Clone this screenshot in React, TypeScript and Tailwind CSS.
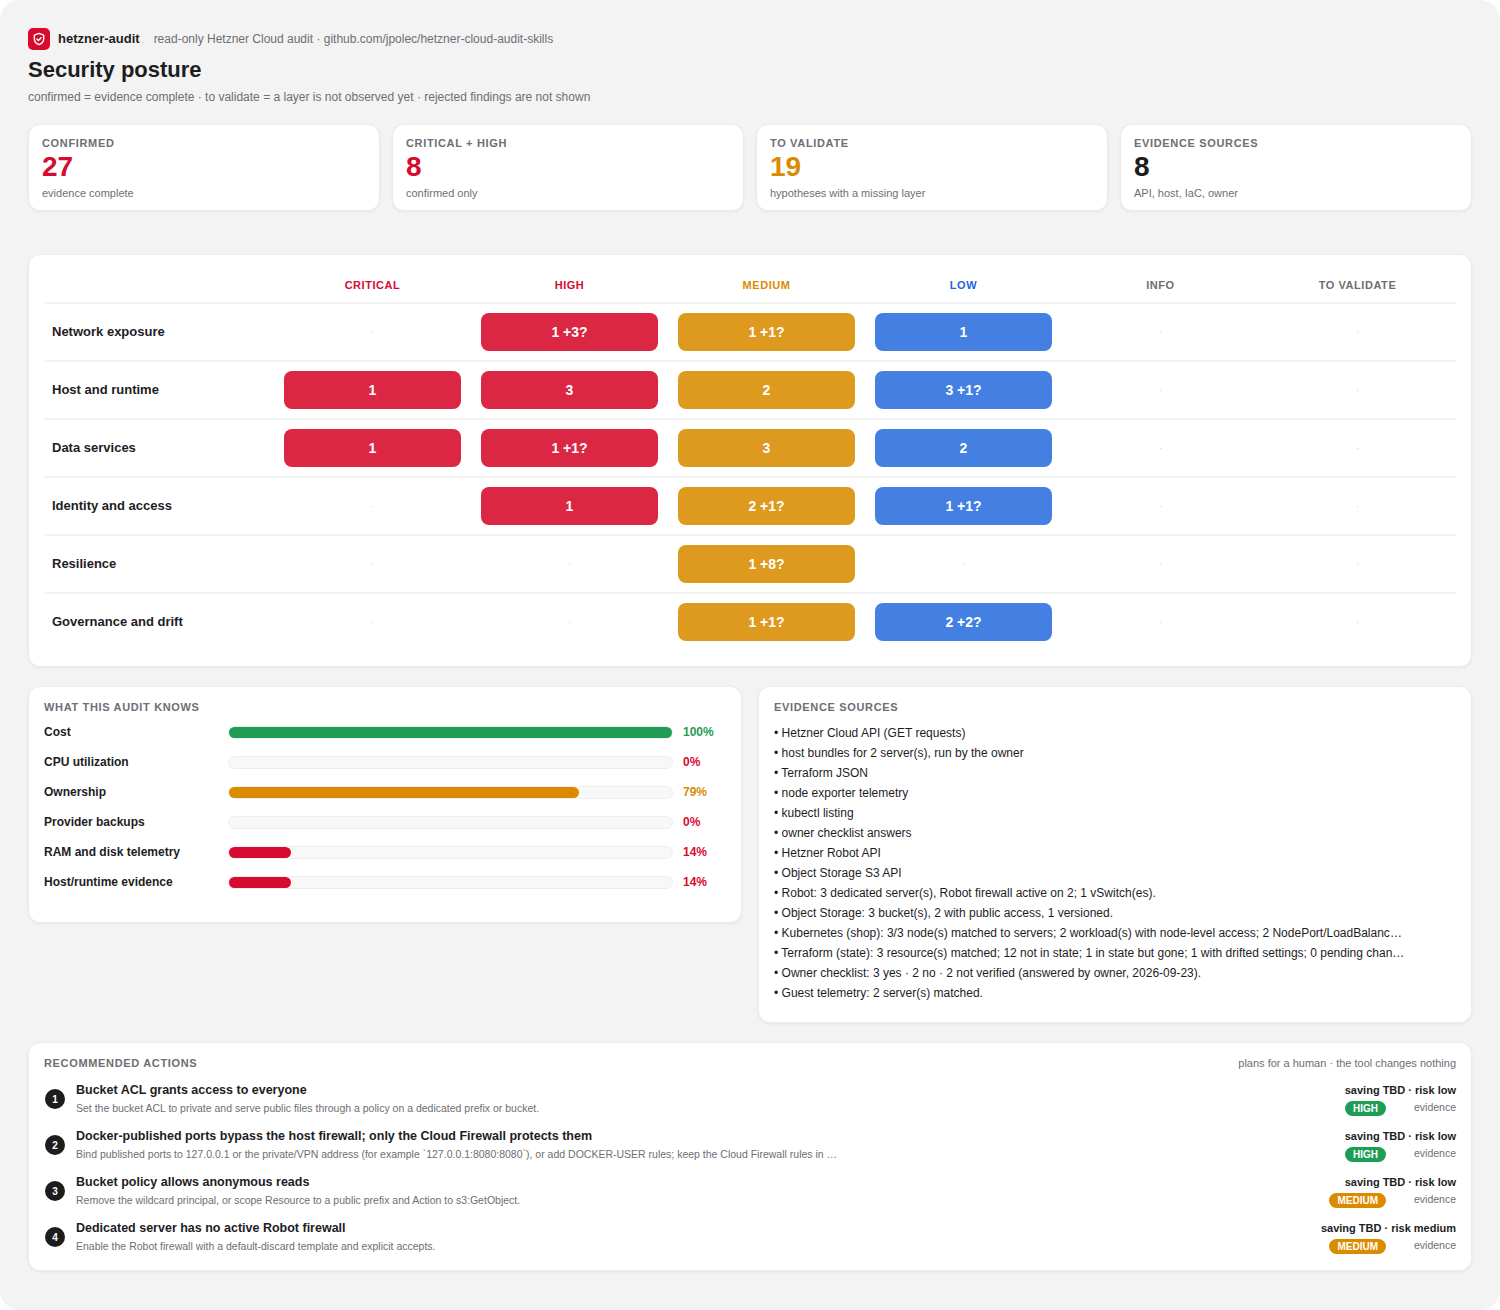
const stats = [
  { label: 'CONFIRMED', value: '27', note: 'evidence complete', color: 'text-[#d70a30]' },
  { label: 'CRITICAL + HIGH', value: '8', note: 'confirmed only', color: 'text-[#d70a30]' },
  { label: 'TO VALIDATE', value: '19', note: 'hypotheses with a missing layer', color: 'text-[#db8b00]' },
  { label: 'EVIDENCE SOURCES', value: '8', note: 'API, host, IaC, owner', color: 'text-[#1d1d1f]' },
];

const columns = [
  { label: 'CRITICAL', color: 'text-[#d70a30]', bg: 'bg-[#db2744]' },
  { label: 'HIGH', color: 'text-[#d70a30]', bg: 'bg-[#db2744]' },
  { label: 'MEDIUM', color: 'text-[#db8b00]', bg: 'bg-[#de991f]' },
  { label: 'LOW', color: 'text-[#1f66dc]', bg: 'bg-[#447fe2]' },
  { label: 'INFO', color: 'text-[#6e6e73]', bg: '' },
  { label: 'TO VALIDATE', color: 'text-[#6e6e73]', bg: '' },
];

const matrix = [
  { name: 'Network exposure', cells: ['', '1 +3?', '1 +1?', '1', '', ''] },
  { name: 'Host and runtime', cells: ['1', '3', '2', '3 +1?', '', ''] },
  { name: 'Data services', cells: ['1', '1 +1?', '3', '2', '', ''] },
  { name: 'Identity and access', cells: ['', '1', '2 +1?', '1 +1?', '', ''] },
  { name: 'Resilience', cells: ['', '', '1 +8?', '', '', ''] },
  { name: 'Governance and drift', cells: ['', '', '1 +1?', '2 +2?', '', ''] },
];

const coverage = [
  { name: 'Cost', pct: 100, text: 'text-[#1f9d55]', bar: 'bg-[#1f9d55]' },
  { name: 'CPU utilization', pct: 0, text: 'text-[#d70a30]', bar: 'bg-[#d70a30]' },
  { name: 'Ownership', pct: 79, text: 'text-[#db8b00]', bar: 'bg-[#db8b00]' },
  { name: 'Provider backups', pct: 0, text: 'text-[#d70a30]', bar: 'bg-[#d70a30]' },
  { name: 'RAM and disk telemetry', pct: 14, text: 'text-[#d70a30]', bar: 'bg-[#d70a30]' },
  { name: 'Host/runtime evidence', pct: 14, text: 'text-[#d70a30]', bar: 'bg-[#d70a30]' },
];

const sources = [
  'Hetzner Cloud API (GET requests)',
  'host bundles for 2 server(s), run by the owner',
  'Terraform JSON',
  'node exporter telemetry',
  'kubectl listing',
  'owner checklist answers',
  'Hetzner Robot API',
  'Object Storage S3 API',
  'Robot: 3 dedicated server(s), Robot firewall active on 2; 1 vSwitch(es).',
  'Object Storage: 3 bucket(s), 2 with public access, 1 versioned.',
  'Kubernetes (shop): 3/3 node(s) matched to servers; 2 workload(s) with node-level access; 2 NodePort/LoadBalancer service(s) exposed',
  'Terraform (state): 3 resource(s) matched; 12 not in state; 1 in state but gone; 1 with drifted settings; 0 pending changes in the plan',
  'Owner checklist: 3 yes · 2 no · 2 not verified (answered by owner, 2026-09-23).',
  'Guest telemetry: 2 server(s) matched.',
];

const actions = [
  {
    title: 'Bucket ACL grants access to everyone',
    desc: 'Set the bucket ACL to private and serve public files through a policy on a dedicated prefix or bucket.',
    risk: 'saving TBD · risk low',
    level: 'HIGH',
  },
  {
    title: 'Docker-published ports bypass the host firewall; only the Cloud Firewall protects them',
    desc: 'Bind published ports to 127.0.0.1 or the private/VPN address (for example `127.0.0.1:8080:8080`), or add DOCKER-USER rules; keep the Cloud Firewall rules in place',
    risk: 'saving TBD · risk low',
    level: 'HIGH',
  },
  {
    title: 'Bucket policy allows anonymous reads',
    desc: 'Remove the wildcard principal, or scope Resource to a public prefix and Action to s3:GetObject.',
    risk: 'saving TBD · risk low',
    level: 'MEDIUM',
  },
  {
    title: 'Dedicated server has no active Robot firewall',
    desc: 'Enable the Robot firewall with a default-discard template and explicit accepts.',
    risk: 'saving TBD · risk medium',
    level: 'MEDIUM',
  },
];

const card = 'bg-white rounded-xl border border-[#ececec] shadow-[0_1px_3px_rgba(0,0,0,0.06)]';
const heading = 'text-[11px] leading-[14px] font-bold tracking-[0.06em] text-[#6e6e73]';

function ShieldLogo() {
  return (
    <div className="w-[22px] h-[22px] rounded-[5px] bg-[#d70a30] flex items-center justify-center shrink-0">
      <svg width="14" height="14" viewBox="0 0 24 24" fill="none" stroke="white" strokeWidth="2.4" strokeLinecap="round" strokeLinejoin="round">
        <path d="M12 2.5l8 3v6c0 5-3.4 8.4-8 10-4.6-1.6-8-5-8-10v-6z" />
        <path d="M8.5 12l2.5 2.5 4.5-4.5" />
      </svg>
    </div>
  );
}

export default function App() {
  return (
    <div className="w-[1500px] h-[1310px] bg-white font-['Liberation_Sans',Arial,sans-serif] text-[#1d1d1f]">
      <div className="h-full rounded-[20px] bg-[#f3f3f3] px-[28px] pt-[28px]">
        {/* Header */}
        <div className="flex items-center h-[22px]">
          <ShieldLogo />
          <span className="ml-[8px] text-[13px] font-bold">hetzner-audit</span>
          <span className="ml-[14px] text-[12px] text-[#6e6e73]">read-only Hetzner Cloud audit · github.com/jpolec/hetzner-cloud-audit-skills</span>
        </div>
        <h1 className="mt-[6px] text-[22px] leading-[28px] font-bold">Security posture</h1>
        <p className="mt-[5px] text-[12px] leading-[16px] text-[#6e6e73]">
          confirmed = evidence complete · to validate = a layer is not observed yet · rejected findings are not shown
        </p>

        {/* Stats */}
        <div className="mt-[19px] grid grid-cols-4 gap-[12px]">
          {stats.map((s) => (
            <div key={s.label} className={`${card} h-[87px] px-[13px] pt-[11px]`}>
              <div className={heading}>{s.label}</div>
              <div className={`mt-[1px] text-[28px] leading-[32px] font-bold ${s.color}`}>{s.value}</div>
              <div className="mt-[3px] text-[11px] leading-[14px] text-[#6e6e73]">{s.note}</div>
            </div>
          ))}
        </div>

        {/* Matrix */}
        <div className={`${card} mt-[43px] h-[413px] px-[15px] pt-[15px]`}>
          <div className="grid grid-cols-[230px_repeat(6,197px)] h-[32px] items-center pb-[2px]">
            <div />
            {columns.map((c) => (
              <div key={c.label} className={`text-center text-[11px] font-bold tracking-[0.05em] ${c.color}`}>
                {c.label}
              </div>
            ))}
          </div>
          {matrix.map((row) => (
            <div key={row.name} className="grid grid-cols-[230px_repeat(6,197px)] h-[58px] items-center border-t-2 border-[#f3f3f3]">
              <div className="pl-[8px] text-[13px] font-bold">{row.name}</div>
              {row.cells.map((value, i) =>
                value ? (
                  <div
                    key={i}
                    className={`mx-[10px] h-[38px] rounded-lg flex items-center justify-center text-white text-[14px] font-bold ${columns[i].bg}`}
                  >
                    {value}
                  </div>
                ) : (
                  <div key={i} className="text-center text-[11px] text-[#d8d8dc]">·</div>
                ),
              )}
            </div>
          ))}
        </div>

        {/* Coverage and sources */}
        <div className="mt-[19px] grid grid-cols-2 gap-[16px] items-start">
          <div className={`${card} h-[237px] px-[15px] pt-[13px]`}>
            <div className={heading}>WHAT THIS AUDIT KNOWS</div>
            <div className="mt-[11px] flex flex-col gap-[16px]">
              {coverage.map((c) => (
                <div key={c.name} className="flex items-center h-[14px]">
                  <div className="w-[184px] text-[12px] font-bold shrink-0">{c.name}</div>
                  <div className="w-[445px] h-[13px] rounded-full bg-[#f8f8f8] border border-[#eeeeee] shrink-0">
                    {c.pct > 0 && (
                      <div className={`h-full rounded-full ${c.bar}`} style={{ width: `${c.pct}%` }} />
                    )}
                  </div>
                  <div className={`ml-[10px] text-[12px] font-bold ${c.text}`}>{c.pct}%</div>
                </div>
              ))}
            </div>
          </div>

          <div className={`${card} h-[337px] px-[15px] pt-[13px]`}>
            <div className={heading}>EVIDENCE SOURCES</div>
            <ul className="mt-[9px]">
              {sources.map((s) => (
                <li key={s} className="h-[20px] w-[634px] truncate text-[12px] leading-[20px]">• {s}</li>
              ))}
            </ul>
          </div>
        </div>

        {/* Actions */}
        <div className={`${card} mt-[19px] h-[229px] px-[15px] pt-[13px]`}>
          <div className="flex items-center justify-between">
            <div className={heading}>RECOMMENDED ACTIONS</div>
            <div className="text-[11px] leading-[14px] text-[#6e6e73]">plans for a human · the tool changes nothing</div>
          </div>
          <div className="mt-[12px] flex flex-col gap-[12px]">
            {actions.map((a, i) => (
              <div key={a.title} className="flex items-center h-[34px]">
                <div className="w-[20px] h-[20px] ml-[1px] rounded-full bg-[#1d1d1f] text-white text-[10px] font-bold flex items-center justify-center shrink-0">
                  {i + 1}
                </div>
                <div className="ml-[11px] min-w-0 flex-1">
                  <div className="text-[12.5px] leading-[16px] font-bold">{a.title}</div>
                  <div className="mt-[2px] w-[763px] truncate text-[10.5px] leading-[16px] text-[#6e6e73]">{a.desc}</div>
                </div>
                <div className="flex flex-col items-end shrink-0">
                  <div className="text-[11px] leading-[16px] font-bold">{a.risk}</div>
                  <div className="mt-[2px] flex items-center h-[16px]">
                    <span className={`h-[15px] px-[8px] rounded-full text-white text-[10px] font-bold flex items-center ${a.level === 'HIGH' ? 'bg-[#1f9d55]' : 'bg-[#db8b00]'}`}>
                      {a.level}
                    </span>
                    <span className="ml-[28px] text-[10.5px] text-[#6e6e73]">evidence</span>
                  </div>
                </div>
              </div>
            ))}
          </div>
        </div>
      </div>
    </div>
  );
}
